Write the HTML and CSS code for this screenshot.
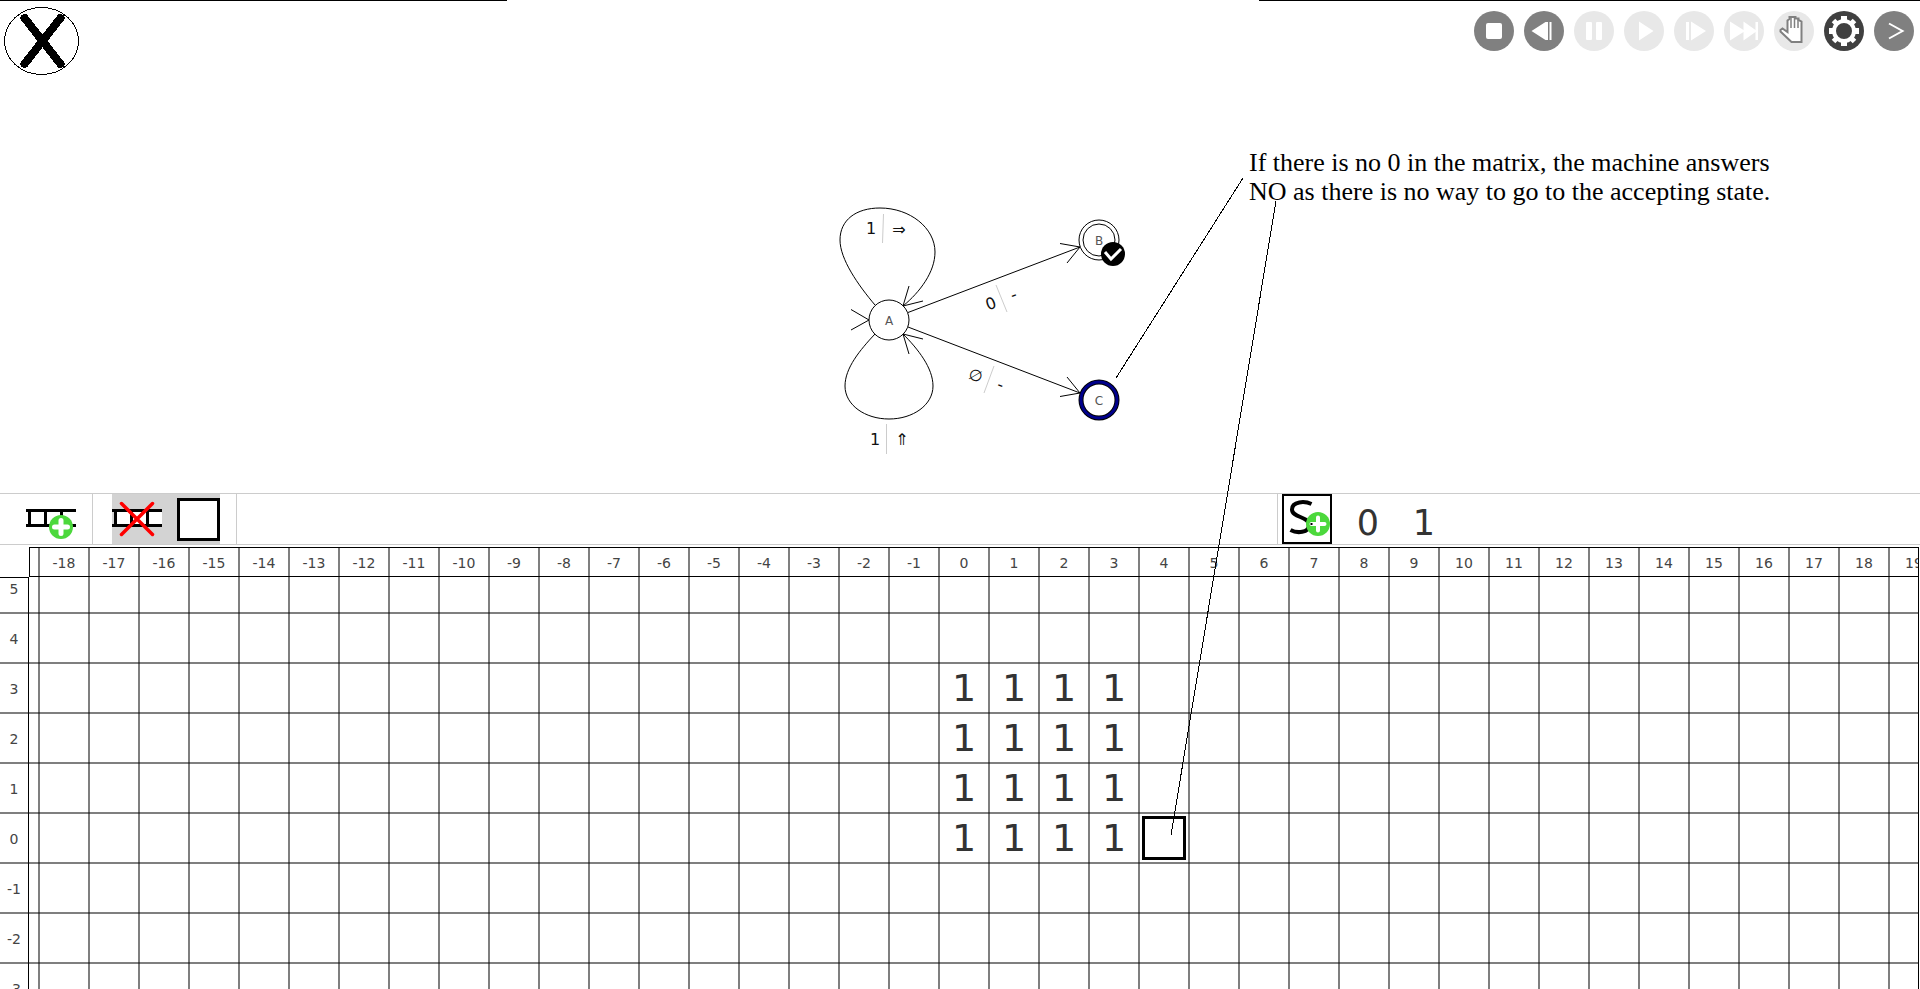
FILE: index.html
```html
<!DOCTYPE html>
<html lang="en">
<head>
<meta charset="utf-8">
<title>Turing machine</title>
<link rel="stylesheet" href="styles.css">
</head>
<body>
<div class="app">
  <main class="stage">
    <div class="top-line top-line-left"></div>
    <div class="top-line top-line-right"></div>
    <header class="topbar">
      <button class="close" aria-label="Close">
        <svg viewBox="0 0 76 69" class="close-icon" shape-rendering="crispEdges"><ellipse cx="37.500" cy="34" rx="37" ry="33.500" fill="#fff" stroke="#000"/><path d="M20.500 11 56.500 57M56.500 11 20.500 57" stroke="#000" stroke-width="8" stroke-linecap="round"/></svg>
      </button>
      <nav class="player">
        <button class="round mid" aria-label="Stop"><svg viewBox="0 0 40 40"><rect x="12" y="12" width="16" height="16" rx="2" fill="#fff"/></svg></button>
        <button class="round mid" aria-label="Step back"><svg viewBox="0 0 40 40"><path d="M7.500 20 21.500 11H24v18h-2.500zM25.500 11h2v18h-2z" fill="#fff"/></svg></button>
        <button class="round pale" aria-label="Pause"><svg viewBox="0 0 40 40"><rect x="12" y="11" width="6" height="18" rx="1" fill="#fff"/><rect x="22" y="11" width="6" height="18" rx="1" fill="#fff"/></svg></button>
        <button class="round pale" aria-label="Play"><svg viewBox="0 0 40 40"><path d="M15 10.500 29.500 20 15 29.500z" fill="#fff"/></svg></button>
        <button class="round pale" aria-label="Step forward"><svg viewBox="0 0 40 40"><path d="M12 11h3v18h-3zM17 10.500 32 20 17 29.500z" fill="#fff"/></svg></button>
        <button class="round pale" aria-label="Go to end"><svg viewBox="0 0 40 40"><path d="M6 10.500 19.500 19V10.500L31.500 19V11h2.500v18h-2.500v-8L19.500 29.500V21L6 29.500z" fill="#fff"/></svg></button>
        <button class="round pale" aria-label="Move"><svg viewBox="0 0 40 40"><path d="M17.500 31 6.500 20.500V19l2-1.500L13.500 21V9.500L15.500 8V6h6v1.500h3V9l3 1.500V31z" fill="#fff" stroke="#808080" stroke-width="2"/><path d="M17 6v11M20.500 6v11M24 8v9" stroke="#808080" stroke-width="1.500" fill="none"/></svg></button>
        <button class="round dark" aria-label="Settings"><svg viewBox="0 0 40 40"><circle cx="20" cy="20" r="10" fill="none" stroke="#fff" stroke-width="4"/><g stroke="#fff" stroke-width="6"><path d="M20 5v5M20 30v5M5 20h5M30 20h5"/><path d="M9.500 9.500 12.500 12.500M27.500 27.500l3 3M30.500 9.500l-3 3M12.500 27.500l-3 3" stroke-width="5"/></g></svg></button>
        <button class="round mid" aria-label="Next"><svg viewBox="0 0 40 40"><path d="M15 12.500 28.500 20 15 27.500" fill="none" stroke="#fff" stroke-width="2"/></svg></button>
      </nav>
    </header>
    <p class="note">If there is no 0 in the matrix, the machine answers<br>NO as there is no way to go to the accepting state.</p>
  </main>

  <section class="toolbar">
    <div class="tools tools-add">
      <button class="tool" aria-label="Add tape"><svg viewBox="0 0 50 50"><path d="M0 16.500h50M0 31.500h50M3.500 16v15M19.500 16v15M35.500 16v15" stroke="#000" stroke-width="3"/><circle cx="35" cy="33" r="12" fill="#4cd83c"/><path d="M35 26.500v13M28.500 33h13" stroke="#fff" stroke-width="5" stroke-linecap="round"/></svg></button>
    </div>
    <div class="tools tools-tape">
      <div class="tape-group">
        <button class="tool" aria-label="Remove tape"><svg viewBox="0 0 50 50"><path d="M2 16h48v16H2z" fill="#fff"/><path d="M0 16.500h50M0 31.500h50M3.500 16v15M19.500 16v15M35.500 16v15" stroke="#000" stroke-width="3"/><path d="M9.500 9.500 40.500 40.500M40.500 9.500 9.500 40.500" stroke="#f00" stroke-width="3.500" stroke-linecap="round"/></svg></button>
        <button class="head-box" aria-label="Head"></button>
      </div>
    </div>
    <div class="tools tools-fill"></div>
    <div class="tools tools-symbols">
      <button class="symbol-add" aria-label="Add symbol"><svg viewBox="0 0 50 50"><path d="M29.500 10C23 7 10 7 10 15.500 10 24 27 22 27 31 27 39 15 39.500 8.500 36" fill="none" stroke="#000" stroke-width="4"/><circle cx="36" cy="30" r="12" fill="#4cd83c"/><path d="M36 23.500v13M29.500 30h13" stroke="#fff" stroke-width="4" stroke-linecap="round"/><path d="M28.500 30h2" stroke="#000" stroke-width="2"/></svg></button>
      <button class="symbol">0</button>
      <button class="symbol">1</button>
    </div>
  </section>

  <section class="board">
    <table class="tape" id="tape">
      <thead><tr id="columns"></tr></thead>
      <tbody id="rows"></tbody>
    </table>
  </section>

  <svg class="diagram" width="1920" height="989" viewBox="0 0 1920 989">
    <g class="edge">
      <path d="M875 305C858 285 840 259 840 240 840 220 856 208 880 208 910 208 935 228 935 252 935 272 920 292 903 306"/>
      <path d="M909 286 903 306 923 301"/>
      <path d="M875 334C860 350 845 368 845 386 845 405 865 419 889 419 913 419 933 405 933 386 933 368 918 349 903 334"/>
      <path d="M923 339 903 334 909 354"/>
      <path d="M851 309.500 869 320 851 330"/>
      <path d="M908 312.500 1080 247M1060 243.500 1080 247 1067 263"/>
      <path d="M908 327 1080 393M1067 377 1080 393 1060 396.500"/>
      <circle cx="889" cy="320" r="20"/>
      <circle cx="1099" cy="240" r="20"/>
      <circle cx="1099" cy="240" r="16"/>
    </g>
    <circle cx="1099" cy="400" r="18" fill="#fff" stroke="#000" stroke-width="5"/>
    <circle cx="1099" cy="400" r="18" fill="none" stroke="#00008b" stroke-width="3"/>
    <g class="state">
      <text x="889" y="325">A</text>
      <text x="1099" y="245">B</text>
      <text x="1099" y="405">C</text>
    </g>
    <circle cx="1113" cy="254" r="12"/>
    <path d="M1105 252 1111 259 1121 249" fill="none" stroke="#fff" stroke-width="3"/>
    <path class="split" d="M883.500 214 882.500 243M886.500 424V454M996 285 1007 312M994 366 984 393"/>
    <g class="rule">
      <text x="871" y="234">1</text><text x="899" y="235">⇒</text>
      <text x="875" y="445">1</text><text x="902" y="445">⇑</text>
      <g transform="rotate(-20.500 991 304)"><text x="991" y="309">0</text></g>
      <g transform="rotate(-20.500 1014 296)"><text x="1014" y="300">-</text></g>
      <g transform="rotate(20.500 976 375)"><text x="976" y="381">∅</text></g>
      <g transform="rotate(20.500 1000 386)"><text x="1000" y="390">-</text></g>
    </g>
    <path class="callout" d="M1243 178 1116 378M1276 201 1171 835"/>
  </svg>
</div>
<script src="tape.js"></script>
</body>
</html>
```
FILE: styles.css
```css
* { box-sizing: border-box; }
body {
  margin: 0;
  background: #fff;
  font-family: "DejaVu Sans", sans-serif;
}
button {
  padding: 0;
  border: 0;
  background: none;
  font: inherit;
  color: inherit;
}
svg { display: block; }
.app {
  position: relative;
  display: flex;
  flex-direction: column;
  height: 100vh;
  overflow: hidden;
}
.stage {
  position: relative;
  flex: 0 0 493px;
}
.top-line {
  position: absolute;
  top: 0;
  height: 1px;
  background: #000;
}
.top-line-left { left: 0; width: 507px; }
.top-line-right { left: 1259px; right: 0; }
.topbar {
  display: flex;
  justify-content: space-between;
  align-items: flex-start;
  padding: 7px 6px 0 4px;
}
.close-icon { width: 76px; height: 69px; }
.player {
  display: flex;
  gap: 10px;
  padding-top: 4px;
}
.round {
  width: 40px;
  height: 40px;
  border-radius: 50%;
}
.mid { background: #808080; }
.pale { background: #e8e8e8; }
.dark { background: #404040; }
.note {
  position: absolute;
  left: 1249px;
  top: 148px;
  margin: 0;
  font: 26px/29px "Liberation Serif", serif;
  white-space: nowrap;
}
.toolbar {
  display: flex;
  flex: 0 0 52px;
  border-top: 1px solid #ccc;
  border-bottom: 1px solid #ccc;
}
.tools {
  display: flex;
  align-items: center;
  border-right: 1px solid #ccc;
}
.tools-add { width: 93px; padding-left: 26px; }
.tools-tape { width: 144px; padding-left: 19px; }
.tools-fill { flex: 1; }
.tools-symbols {
  width: 642px;
  padding-left: 4px;
  border-right: 0;
}
.tool { width: 50px; height: 50px; }
.tape-group {
  display: flex;
  align-items: center;
  gap: 15px;
  background: #d3d3d3;
}
.head-box {
  width: 43px;
  height: 43px;
  border: 3px solid #000;
  background: #fff;
}
.symbol-add {
  width: 50px;
  height: 50px;
  outline: 2px solid #000;
  outline-offset: -2px;
}
.symbol {
  width: 56px;
  padding-top: 8px;
  font-size: 35px;
  line-height: 42px;
  color: #333;
  text-align: center;
}
.symbol-add + .symbol { margin-left: 8px; }
.board {
  flex: 1;
  min-height: 0;
  margin: 2px 1px 0 0;
  border-right: 1px solid #000;
  overflow: hidden;
  background: repeating-linear-gradient(to right, rgba(0, 0, 0, 0.5) 0 2px, transparent 2px 50px) 38px 0 no-repeat;
}
.tape {
  width: 1938px;
  table-layout: fixed;
  border-collapse: separate;
  border-spacing: 0;
}
.tape th, .tape td {
  width: 50px;
  height: 50px;
  padding: 0 0 0 2px;
  text-align: center;
  vertical-align: middle;
}
.tape th {
  font-size: 14px;
  font-weight: normal;
  line-height: 22px;
  color: #444;
}
.tape thead th {
  height: 30px;
  padding-top: 2px;
  border: 1px solid #000;
  border-width: 1px 0;
}
.tape thead .corner {
  width: 29px;
  border-color: transparent;
}
.tape thead .edge-cell {
  width: 9px;
  border-left-width: 1px;
}
.tape tbody th, .tape tbody td {
  background: linear-gradient(to top, rgba(0, 0, 0, 0.5) 2px, transparent 2px);
}
.tape tbody th {
  padding-left: 0;
  border-right: 1px solid #000;
}
.tape tbody tr:first-child > * { height: 37px; }
.tape tbody tr:first-child th {
  border-top: 1px solid #000;
  vertical-align: top;
}
.tape td {
  padding-bottom: 2px;
  font-size: 38px;
  line-height: 46px;
  color: #333;
}
.cursor {
  width: 44px;
  height: 44px;
  margin: 0 auto;
  border: 3px solid #000;
}
.diagram {
  position: absolute;
  left: 0;
  top: 0;
  pointer-events: none;
}
.edge { fill: none; stroke: #000; stroke-width: 1; }
.state { font-size: 12px; fill: #555; text-anchor: middle; }
.rule { font-size: 16px; fill: #111; text-anchor: middle; }
.split { fill: none; stroke: #ccc; }
.callout { fill: none; stroke: #000; shape-rendering: crispEdges; }
```
FILE: tape.js
```js
const firstColumn = -18, lastColumn = 19, topRow = 5, bottomRow = -3;
const head = { x: 4, y: 0 };
const symbolAt = (x, y) => (x >= 0 && x <= 3 && y >= 0 && y <= 3 ? '1' : '');

let headHtml = '<th class="corner"></th><th class="edge-cell"></th>';
for (let x = firstColumn; x <= lastColumn; x++) headHtml += `<th scope="col">${x}</th>`;
document.getElementById('columns').innerHTML = headHtml;

let bodyHtml = '';
for (let y = topRow; y >= bottomRow; y--) {
  bodyHtml += `<tr><th scope="row">${y}</th><td></td>`;
  for (let x = firstColumn; x <= lastColumn; x++) {
    const isHead = x === head.x && y === head.y;
    bodyHtml += `<td>${isHead ? '<div class="cursor"></div>' : symbolAt(x, y)}</td>`;
  }
  bodyHtml += '</tr>';
}
document.getElementById('rows').innerHTML = bodyHtml;
```
